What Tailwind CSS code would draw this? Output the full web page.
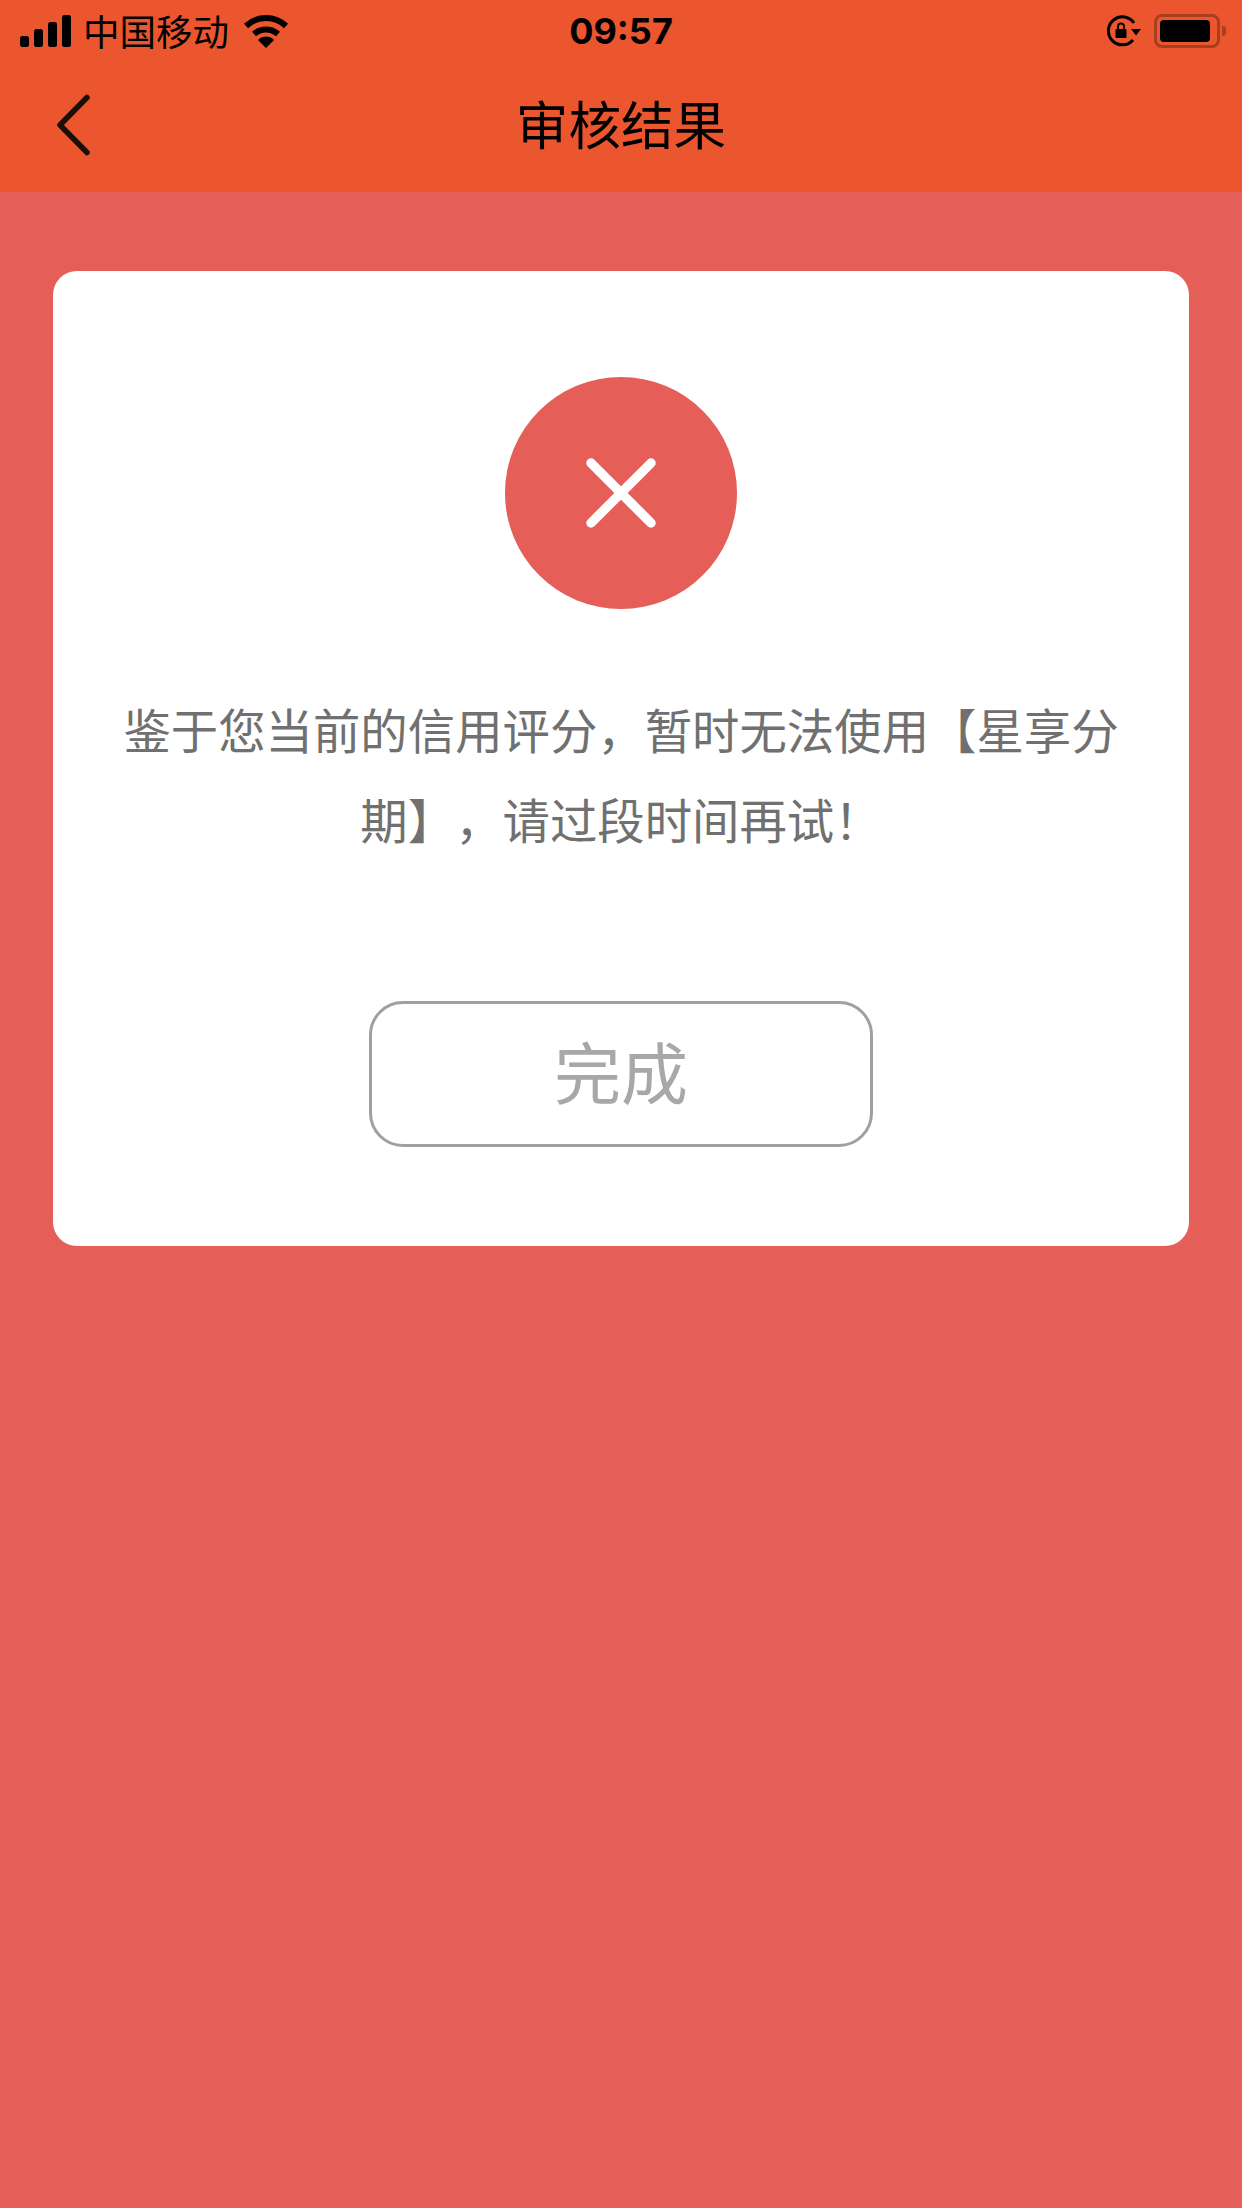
<!DOCTYPE html>
<html lang="zh-CN">
<head>
    <meta charset="UTF-8">
    <title>审核结果</title>
    <script src="https://cdn.jsdelivr.net/npm/@tailwindcss/browser@4"></script>
</head>
<body class="bg-[#e65e58] font-['Noto_Sans_CJK_SC','Liberation_Sans',sans-serif]">
    <div class="w-[1242px] h-[2208px] flex flex-col">
        <!-- header -->
        <div class="bg-[#eb562e] h-[192px] shrink-0">
            <div class="h-[60px] grid grid-cols-3 items-center">
                <div class="flex items-center pl-[20px]">
                    <svg class="w-[51px] h-[32px]" viewBox="0 0 51 32" fill="#000">
                        <rect x="0" y="21" width="9" height="11" rx="2.5"/>
                        <rect x="14" y="14" width="9" height="18" rx="2.5"/>
                        <rect x="28" y="7" width="9" height="25" rx="2.5"/>
                        <rect x="42" y="0" width="9" height="32" rx="2.5"/>
                    </svg>
                    <span class="ml-[12px] text-[36.5px] leading-[60px] text-black">中国移动</span>
                    <svg class="ml-[14px] w-[46px] h-[34px]" viewBox="0 0 46 34" fill="none" stroke="#000" stroke-width="6">
                        <path d="M3 12 A29 29 0 0 1 43 12"/>
                        <path d="M11 20 A18 18 0 0 1 35 20"/>
                        <path d="M23 34 L15 26 A11 11 0 0 1 31 26 Z" fill="#000" stroke="none"/>
                    </svg>
                </div>
                <div class="text-center text-[36px] leading-[62px] font-bold text-black font-['Inter','Liberation_Sans',sans-serif]">09:57</div>
                <div class="flex items-center justify-end pr-[16px]">
                    <svg class="w-[34px] h-[32px]" viewBox="0 0 34 32" fill="none">
                        <path d="M26 25 A14 14 0 1 1 27 8" stroke="#000" stroke-width="3"/>
                        <path d="M24 14 H34 L29 20.5 Z" fill="#000"/>
                        <rect x="8.5" y="14" width="11" height="9" rx="1" fill="#000"/>
                        <path d="M11 14 V11.5 A3 3 0 0 1 17 11.5 V14" stroke="#000" stroke-width="1.8"/>
                    </svg>
                    <div class="ml-[13px] w-[66px] h-[34px] border-[3px] border-[#a8401f] rounded-[8px] p-[3px]">
                        <div class="w-[50px] h-full bg-black rounded-[4px]"></div>
                    </div>
                    <div class="ml-[2px] w-[4px] h-[10px] bg-[#a8401f] rounded-r-[3px]"></div>
                </div>
            </div>
            <div class="h-[132px] relative flex items-center justify-center -mt-[4px]">
                <svg class="absolute left-[52px] top-[35px] w-[44px] h-[68px]" viewBox="0 0 44 68" fill="none" stroke="#1c0f0a" stroke-width="5.5" stroke-linecap="round" stroke-linejoin="round">
                    <path d="M35 6.5 L8 34 L35 61.5"/>
                </svg>
                <h1 class="text-[52.6px] leading-[70px] font-normal text-black">审核结果</h1>
            </div>
        </div>

        <!-- result card -->
        <div class="px-[53px] pt-[79px]">
            <div class="bg-white rounded-[24px] h-[975px] pt-[106px] flex flex-col items-center">
                <div class="w-[232px] h-[232px] rounded-full bg-[#e65e58] flex items-center justify-center">
                    <svg class="w-[70px] h-[70px]" viewBox="0 0 70 70" fill="none" stroke="#fff" stroke-width="9.5" stroke-linecap="round">
                        <path d="M5 5 L65 65 M65 5 L5 65"/>
                    </svg>
                </div>
                <p class="mt-[75px] w-[1016px] text-center text-[47.4px] leading-[90px] text-[#707070] [text-spacing-trim:space-all]">鉴于您当前的信用评分，暂时无法使用【星享分期】，请过段时间再试！</p>
                <button class="mt-[137px] w-[504px] h-[146px] border-[3px] border-[#a0a0a0] rounded-[34px] pb-[8px] text-[67px] text-[#a8a8a8]">完成</button>
            </div>
        </div>
    </div>
</body>
</html>
